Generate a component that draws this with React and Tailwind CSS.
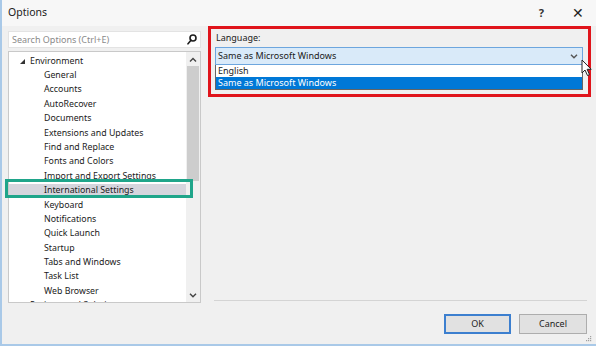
import { useState } from "react";

const children = [
  "General",
  "Accounts",
  "AutoRecover",
  "Documents",
  "Extensions and Updates",
  "Find and Replace",
  "Fonts and Colors",
  "Import and Export Settings",
  "International Settings",
  "Keyboard",
  "Notifications",
  "Quick Launch",
  "Startup",
  "Tabs and Windows",
  "Task List",
  "Web Browser",
];

const SearchIcon = () => (
  <svg width="10" height="11" viewBox="0 0 10 11" fill="none" stroke="#1e1e1e" strokeWidth="1.6">
    <circle cx="6" cy="4" r="3" />
    <path d="M4 6.2 L1 9.8" strokeLinecap="round" />
  </svg>
);

const Chevron = ({ up, color = "#444" }) => (
  <svg width="8" height="5" viewBox="0 0 8 5" fill="none" stroke={color} strokeWidth="1.4">
    <path d={up ? "M1 4.5 L4 1.5 L7 4.5" : "M1 0.8 L4 3.8 L7 0.8"} />
  </svg>
);

const Cursor = () => (
  <svg width="12" height="18" viewBox="0 0 12 18">
    <path d="M1 1 L1 14 L4 11 L6.5 16.5 L8.5 15.6 L6.1 10.3 L10.2 10.3 Z" fill="#fff" stroke="#222" strokeWidth="1" strokeLinejoin="round" />
  </svg>
);

export default function App() {
  const [selected] = useState("International Settings");

  return (
    <div className="w-[596px] h-[349px] bg-white overflow-hidden" style={{ fontFamily: '"Noto Sans", "Open Sans", sans-serif' }}>
      <div className="h-[346px] bg-[#f0f0f0] border-l-2 border-b-2 border-[#a9c9e8] flex flex-col text-[9px] text-[#1a1a1a]">
        {/* title bar */}
        <div className="h-[26px] shrink-0 flex items-center pl-[6px] pr-[12px] bg-[#f7f7f7]">
          <span className="text-[10.5px]">Options</span>
          <span className="ml-auto text-[11px] font-bold text-[#333]">?</span>
          <span className="ml-[28px] text-[14px] text-[#222] leading-none">✕</span>
        </div>

        {/* body */}
        <div className="h-[277px] shrink-0 flex pl-[6px]">
          {/* left column */}
          <div className="w-[193px] flex flex-col pt-[5px] gap-[3px]">
            <div className="h-[17px] bg-white border border-[#e3e3e3] flex items-center pl-[3px] pr-[3px]">
              <span className="text-[#8a8a8a]">Search Options (Ctrl+E)</span>
              <span className="ml-auto"><SearchIcon /></span>
            </div>
            <div className="relative h-[252px]">
              <div className="h-full bg-white border border-[#c9c9c9] flex overflow-hidden text-[8.8px]">
                <div className="flex-1 pt-[2px] overflow-hidden">
                  <div className="h-[14.4px] flex items-center">
                    <span className="w-[21px] flex justify-end pr-[5px]">
                      <svg width="5" height="5" viewBox="0 0 5 5"><path d="M5 0 L5 5 L0 5 Z" fill="#333" /></svg>
                    </span>
                    <span>Environment</span>
                  </div>
                  {children.map((c) => (
                    <div key={c} className={`h-[14.4px] flex items-center pl-[35px] ${c === selected ? "bg-[#d5d5dd]" : ""}`}>
                      <span>{c}</span>
                    </div>
                  ))}
                  <div className="h-[14.4px] flex items-center pl-[21px]">
                    <span>Projects and Solutions</span>
                  </div>
                </div>
                <div className="w-[14px] bg-[#f0f0f0] flex flex-col items-center">
                  <div className="h-[14px] flex items-center"><Chevron up /></div>
                  <div className="w-[12px] h-[115px] bg-[#cdcdcd]" />
                  <div className="mt-auto h-[14px] flex items-center"><Chevron /></div>
                </div>
              </div>
              {/* highlight annotation around the selected item */}
              <div className="absolute left-[-3px] top-[128px] w-[188px] h-[19px] border-[3px] border-[#1fa58a]" />
            </div>
          </div>

          {/* right column */}
          <div className="flex-1 flex flex-col pl-[7px]">
            <div className="relative w-[383px] h-[71px] border-[3px] border-[#e0141b] pl-[4px] pt-[2px] pr-[5px]">
              <div className="h-[14px] flex items-center pl-[1px]">Language:</div>
              <div className="mt-[2px] h-[18px] bg-[#d9eaf9] border border-[#6da6de] flex items-center pl-[2px] pr-[4px]">
                <span>Same as Microsoft Windows</span>
                <span className="ml-auto"><Chevron color="#555" /></span>
              </div>
              <div className="bg-white border border-[#646464] border-t-0">
                <div className="h-[12px] flex items-center pl-[2px]">English</div>
                <div className="h-[12px] flex items-center pl-[2px] bg-[#0078d7] text-white">Same as Microsoft Windows</div>
              </div>
              <div className="absolute left-[370px] top-[30px]"><Cursor /></div>
            </div>
            <div className="mt-auto mb-[2px] ml-[6px] mr-[9px] h-px bg-[#d4d4d4]" />
          </div>
        </div>

        {/* buttons */}
        <div className="flex justify-end gap-[8px] pt-[11px] pr-[9px]">
          <button className="w-[67px] h-[20px] bg-[#e1e1e1] border-2 border-[#3c7fcf] text-[#1e1e1e]">OK</button>
          <button className="w-[68px] h-[20px] bg-[#e1e1e1] border border-[#adadad] text-[#1e1e1e]">Cancel</button>
        </div>
        <div className="mt-auto flex justify-end pr-[4px] pb-[2px]">
          <svg width="6" height="6" viewBox="0 0 6 6" fill="#a0a0a0">
            <rect x="4" y="0" width="1.2" height="1.2" />
            <rect x="2" y="2" width="1.2" height="1.2" />
            <rect x="4" y="2" width="1.2" height="1.2" />
            <rect x="0" y="4" width="1.2" height="1.2" />
            <rect x="2" y="4" width="1.2" height="1.2" />
            <rect x="4" y="4" width="1.2" height="1.2" />
          </svg>
        </div>
      </div>
    </div>
  );
}
